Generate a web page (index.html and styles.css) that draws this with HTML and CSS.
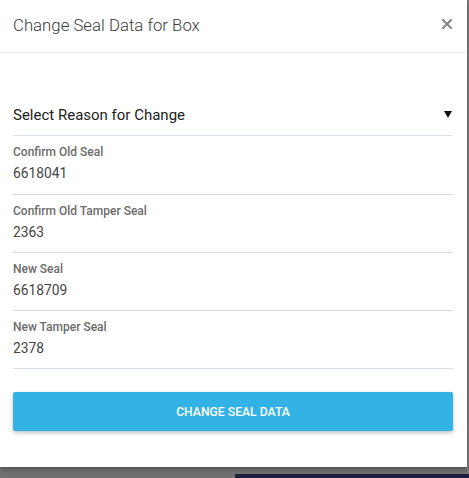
FILE: index.html
```html
<!DOCTYPE html>
<html>
<head>
<meta charset="utf-8">
<link rel="stylesheet" href="styles.css">
</head>
<body>
<div class="modal">
  <div class="header">
    <span class="title">Change Seal Data for Box</span>
    <svg class="close" width="10" height="10" viewBox="0 0 10 10"><path d="M1 1L9 9M9 1L1 9" stroke="#8a8a8a" stroke-width="2.2" stroke-linecap="square"/></svg>
  </div>
  <div class="content">
    <div class="select">
      <span>Select Reason for Change</span>
      <svg width="8" height="7" viewBox="0 0 8 7"><path d="M0 0H8L4 7Z" fill="#111"/></svg>
    </div>
    <div class="field first">
      <div class="label">Confirm Old Seal</div>
      <div class="value">6618041</div>
    </div>
    <div class="field">
      <div class="label">Confirm Old Tamper Seal</div>
      <div class="value">2363</div>
    </div>
    <div class="field">
      <div class="label">New Seal</div>
      <div class="value">6618709</div>
    </div>
    <div class="field">
      <div class="label">New Tamper Seal</div>
      <div class="value">2378</div>
    </div>
    <button class="btn">CHANGE SEAL DATA</button>
  </div>
</div>
</body>
</html>
```
FILE: styles.css
```css
html, body {
  margin: 0;
  padding: 0;
}
body {
  width: 469px;
  height: 478px;
  overflow: hidden;
  font-family: Roboto, "Liberation Sans", sans-serif;
  background:
    linear-gradient(#1c1f3f, #1c1f3f) 235px 474px / 234px 4px no-repeat,
    linear-gradient(#7d7d7d, #7d7d7d) 467px 0 / 2px 478px no-repeat,
    #727272;
}
.modal {
  width: 467px;
  height: 467px;
  background: #fff;
  box-shadow: 0 2px 6px rgba(0,0,0,0.35);
  display: flex;
  flex-direction: column;
}
.header {
  height: 53px;
  border-bottom: 1px solid #eeeeee;
  display: flex;
  align-items: center;
  justify-content: space-between;
  padding: 0 15px 3px 13px;
  box-sizing: border-box;
}
.title {
  font-size: 16.8px;
  color: #3a3a3a;
  font-weight: 300;
}
.close {
  margin-top: -2px;
}
.content {
  padding: 42px 14px 0 13px;
  display: flex;
  flex-direction: column;
}
.select {
  height: 41px;
  border-bottom: 1px solid #dde1e8;
  display: flex;
  align-items: center;
  justify-content: space-between;
  padding: 0 1px 1px 0;
  font-size: 15px;
  color: #212121;
  box-sizing: border-box;
}
.field {
  padding: 8px 0 9px;
  border-bottom: 1px solid #d8dce3;
  display: flex;
  flex-direction: column;
  gap: 3px;
}
.field.first {
  padding-bottom: 10px;
}
.label {
  font-size: 12px;
  line-height: 16px;
  font-weight: 500;
  color: #6b6b6b;
}
.value {
  font-size: 13.8px;
  line-height: 21px;
  color: #444;
}
.btn {
  margin-top: 23px;
  height: 39px;
  border: none;
  border-radius: 2px;
  background: #33b3e5;
  color: #fff;
  font-family: Roboto, "Liberation Sans", sans-serif;
  font-size: 12.2px;
  font-weight: 500;
  box-shadow: 0 2px 4px rgba(0,0,0,0.25);
}
```
